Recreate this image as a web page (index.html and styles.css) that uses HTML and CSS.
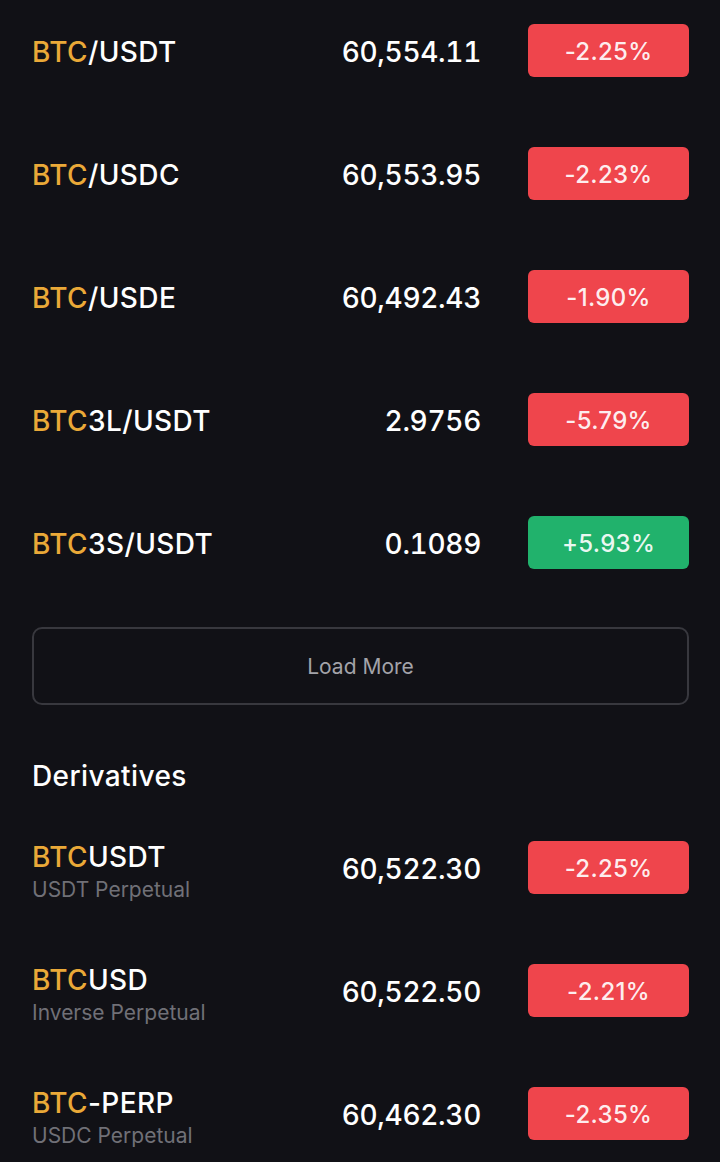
FILE: index.html
```html
<!DOCTYPE html>
<html lang="en">
<head>
<meta charset="utf-8">
<link rel="stylesheet" href="styles.css">
</head>
<body>
<div class="page">
  <div class="list">
    <div class="row"><div class="name"><span class="base">BTC</span>/USDT</div><div class="price">60,554.11</div><div class="badge down">-2.25%</div></div>
    <div class="row"><div class="name"><span class="base">BTC</span>/USDC</div><div class="price">60,553.95</div><div class="badge down">-2.23%</div></div>
    <div class="row"><div class="name"><span class="base">BTC</span>/USDE</div><div class="price">60,492.43</div><div class="badge down">-1.90%</div></div>
    <div class="row"><div class="name"><span class="base">BTC</span>3L/USDT</div><div class="price">2.9756</div><div class="badge down">-5.79%</div></div>
    <div class="row"><div class="name"><span class="base">BTC</span>3S/USDT</div><div class="price">0.1089</div><div class="badge up">+5.93%</div></div>
  </div>
  <button class="load-more">Load More</button>
  <h2 class="section-title">Derivatives</h2>
  <div class="list deriv">
    <div class="row"><div class="name-block"><div class="name"><span class="base">BTC</span>USDT</div><div class="sub">USDT Perpetual</div></div><div class="price">60,522.30</div><div class="badge down">-2.25%</div></div>
    <div class="row"><div class="name-block"><div class="name"><span class="base">BTC</span>USD</div><div class="sub">Inverse Perpetual</div></div><div class="price">60,522.50</div><div class="badge down">-2.21%</div></div>
    <div class="row"><div class="name-block"><div class="name"><span class="base">BTC</span>-PERP</div><div class="sub">USDC Perpetual</div></div><div class="price">60,462.30</div><div class="badge down">-2.35%</div></div>
  </div>
</div>
</body>
</html>
```
FILE: styles.css
```css
html, body {
  margin: 0;
  padding: 0;
  background: #111116;
}
body {
  font-family: Inter, Roboto, "Liberation Sans", sans-serif;
  color: #ffffff;
  height: 1162px;
  overflow: hidden;
}
.page {
  padding: 24px 31px 0 32px;
  display: flex;
  flex-direction: column;
}
.list {
  display: flex;
  flex-direction: column;
  gap: 70px;
}
.row {
  height: 53px;
  display: flex;
  align-items: center;
}
.name {
  flex: 1;
  font-size: 28px;
  font-weight: 500;
  line-height: 32px;
  letter-spacing: 0.4px;
  padding-top: 2px;
}
.base {
  color: #eaa938;
}
.price {
  font-size: 28px;
  font-weight: 500;
  text-align: right;
  margin-right: 47px;
  font-variant-numeric: tabular-nums;
  letter-spacing: -0.3px;
  padding-top: 2px;
}
.badge {
  width: 161px;
  height: 53px;
  border-radius: 6px;
  display: flex;
  align-items: center;
  justify-content: center;
  font-size: 24px;
  font-weight: 500;
  letter-spacing: 0.3px;
  color: rgba(255, 255, 255, 0.92);
  padding-top: 2px;
  box-sizing: border-box;
}
.down { background: #ef454c; }
.up { background: #21b26c; }
.load-more {
  margin-top: 58px;
  height: 78px;
  width: 100%;
  background: transparent;
  border: 2px solid #38383e;
  border-radius: 10px;
  color: #a3a3a9;
  font-family: inherit;
  font-size: 21px;
  padding-top: 2px;
}
.section-title {
  margin: 51px 0 0 0;
  font-size: 28px;
  font-weight: 500;
  line-height: 36px;
  letter-spacing: 0.4px;
  padding-top: 2px;
}
.deriv {
  margin-top: 47px;
}
.name-block {
  flex: 1;
  display: flex;
  flex-direction: column;
  margin-top: 8px;
}
.name-block .name {
  padding-top: 0;
}
.sub {
  font-size: 21px;
  line-height: 27px;
  color: #707077;
  margin-top: 3px;
}
```
